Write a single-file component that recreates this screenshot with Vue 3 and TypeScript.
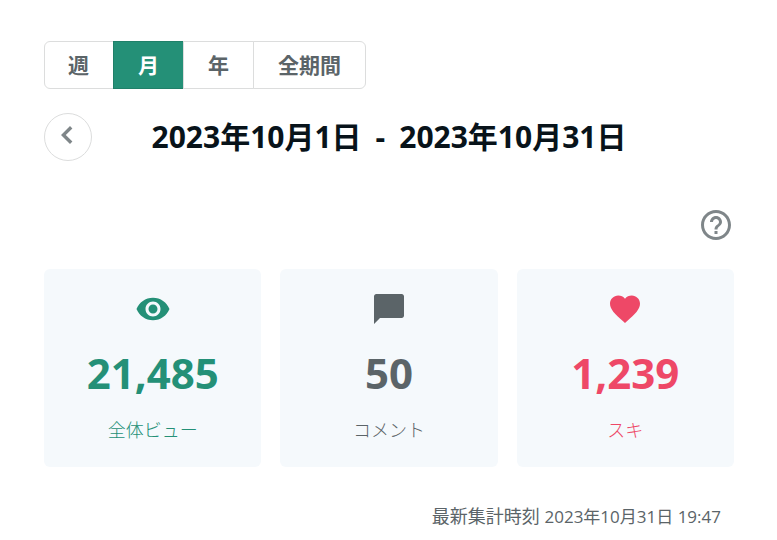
<script setup lang="ts">
import { ref } from 'vue'

interface Period { id: string; label: string }
interface Stat { id: string; value: number; label: string; icon: string }

const periods: Period[] = [
  { id: 'week', label: '週' },
  { id: 'month', label: '月' },
  { id: 'year', label: '年' },
  { id: 'all', label: '全期間' },
]
const selected = ref<string>('month')

const stats: Stat[] = [
  {
    id: 'views',
    value: 21485,
    label: '全体ビュー',
    icon: 'M12 4.5C7 4.5 2.73 7.61 1 12c1.73 4.39 6 7.5 11 7.5s9.27-3.11 11-7.5c-1.73-4.39-6-7.5-11-7.5zM12 17c-2.76 0-5-2.24-5-5s2.24-5 5-5 5 2.24 5 5-2.24 5-5 5zm0-8c-1.66 0-3 1.34-3 3s1.34 3 3 3 3-1.34 3-3-1.34-3-3-3z',
  },
  {
    id: 'comments',
    value: 50,
    label: 'コメント',
    icon: 'M20.5 2h-17C2.7 2 2 2.7 2 3.5V22l4-4h14.5c.8 0 1.5-.7 1.5-1.5v-13c0-.8-.7-1.5-1.5-1.5z',
  },
  {
    id: 'likes',
    value: 1239,
    label: 'スキ',
    icon: 'M12 21.35l-1.45-1.32C5.4 15.36 2 12.28 2 8.5 2 5.42 4.42 3 7.5 3c1.74 0 3.41.81 4.5 2.09C13.09 3.81 14.76 3 16.5 3 19.58 3 22 5.42 22 8.5c0 3.78-3.4 6.86-8.55 11.54L12 21.35z',
  },
]
</script>

<template>
  <main class="dashboard">
    <div class="periods" role="group" aria-label="集計期間">
      <button
        v-for="p in periods"
        :key="p.id"
        type="button"
        class="period"
        :class="{ active: selected === p.id }"
        :aria-pressed="selected === p.id"
        @click="selected = p.id"
      >{{ p.label }}</button>
    </div>

    <div class="range">
      <button type="button" class="prev" aria-label="前の期間">
        <svg viewBox="0 0 24 24" aria-hidden="true"><path d="M15.6 7.6 14 6l-6 6 6 6 1.6-1.6L11.2 12z" /></svg>
      </button>
      <h1 class="dates"><span>2023年10月1日</span><span>-</span><span>2023年10月31日</span></h1>
    </div>

    <div class="help-row">
      <button type="button" class="help" aria-label="ヘルプ">
        <svg viewBox="0 0 24 24" aria-hidden="true"><path d="M11 18h2v-2h-2v2zm1-16C6.48 2 2 6.48 2 12s4.48 10 10 10 10-4.48 10-10S17.52 2 12 2zm0 18c-4.41 0-8-3.59-8-8s3.59-8 8-8 8 3.59 8 8-3.59 8-8 8zm0-14c-2.21 0-4 1.79-4 4h2c0-1.1.9-2 2-2s2 .9 2 2c0 2-3 1.75-3 5h2c0-2.25 3-2.5 3-5 0-2.21-1.79-4-4-4z" /></svg>
      </button>
    </div>

    <section class="cards">
      <article v-for="s in stats" :key="s.id" class="card" :class="s.id">
        <svg viewBox="0 0 24 24" aria-hidden="true"><path :d="s.icon" /></svg>
        <p class="value">{{ s.value.toLocaleString('en-US') }}</p>
        <p class="label">{{ s.label }}</p>
      </article>
    </section>

    <p class="updated">最新集計時刻 <time datetime="2023-10-31T19:47">2023年10月31日 19:47</time></p>
  </main>
</template>

<style>
body {
  background: #fff;
}
</style>

<style scoped>
.dashboard {
  padding: 41px 43px 8px 44px;
  color: #5b6468;
  font-family: "Open Sans", "Noto Sans CJK JP", sans-serif;
}
button {
  box-sizing: border-box;
  margin: 0;
  padding: 0;
  font-family: inherit;
  color: inherit;
  background: #fff;
  border: 1px solid #dcdddd;
  cursor: pointer;
}
svg {
  display: block;
  fill: currentColor;
}
.periods {
  display: flex;
}
.period {
  height: 48px;
  padding: 0 24px;
  font-size: 21px;
  font-weight: 700;
  line-height: 30px;
}
.period + .period {
  margin-left: -1px;
}
.period:first-child {
  padding-left: 23px;
  border-radius: 6px 0 0 6px;
}
.period:last-child {
  border-radius: 0 6px 6px 0;
}
.period.active {
  color: #fff;
  background: #249077;
  border-color: #208069;
}
.range {
  display: grid;
  grid-template-columns: 48px 1fr 48px;
  align-items: center;
  margin-top: 24px;
}
.prev {
  display: flex;
  align-items: center;
  justify-content: center;
  width: 48px;
  height: 48px;
  padding: 0 2px 4px 0;
  border-radius: 50%;
  color: #7f8689;
}
.prev svg {
  width: 36px;
  height: 36px;
}
.dates {
  display: flex;
  justify-content: center;
  gap: 14px;
  margin: 0;
  color: #08131a;
  font-size: 30px;
  font-weight: 700;
  line-height: 48px;
  white-space: nowrap;
}
.help-row {
  display: flex;
  justify-content: flex-end;
  margin-top: 46px;
}
.help {
  border: 0;
  color: #7f8689;
}
.help svg {
  width: 36px;
  height: 36px;
}
.cards {
  display: grid;
  grid-template-columns: repeat(3, 1fr);
  gap: 19px;
  margin-top: 26px;
}
.card {
  display: flex;
  flex-direction: column;
  align-items: center;
  padding: 22px 12px;
  border-radius: 6px;
  background: #f5f9fc;
}
.card svg {
  width: 36px;
  height: 36px;
}
.views {
  color: #249077;
}
.comments {
  color: #5b6468;
}
.likes {
  color: #ee4867;
}
.value {
  margin: 16px 0 0;
  font-size: 42px;
  font-weight: 700;
  line-height: 60px;
}
.label {
  margin: 12px 0 0;
  font-size: 18px;
  font-weight: 300;
  line-height: 30px;
}
.updated {
  margin: 35px 13px 0 0;
  font-size: 18px;
  line-height: 28px;
  text-align: right;
}
.updated time {
  font-size: 17px;
}
</style>
